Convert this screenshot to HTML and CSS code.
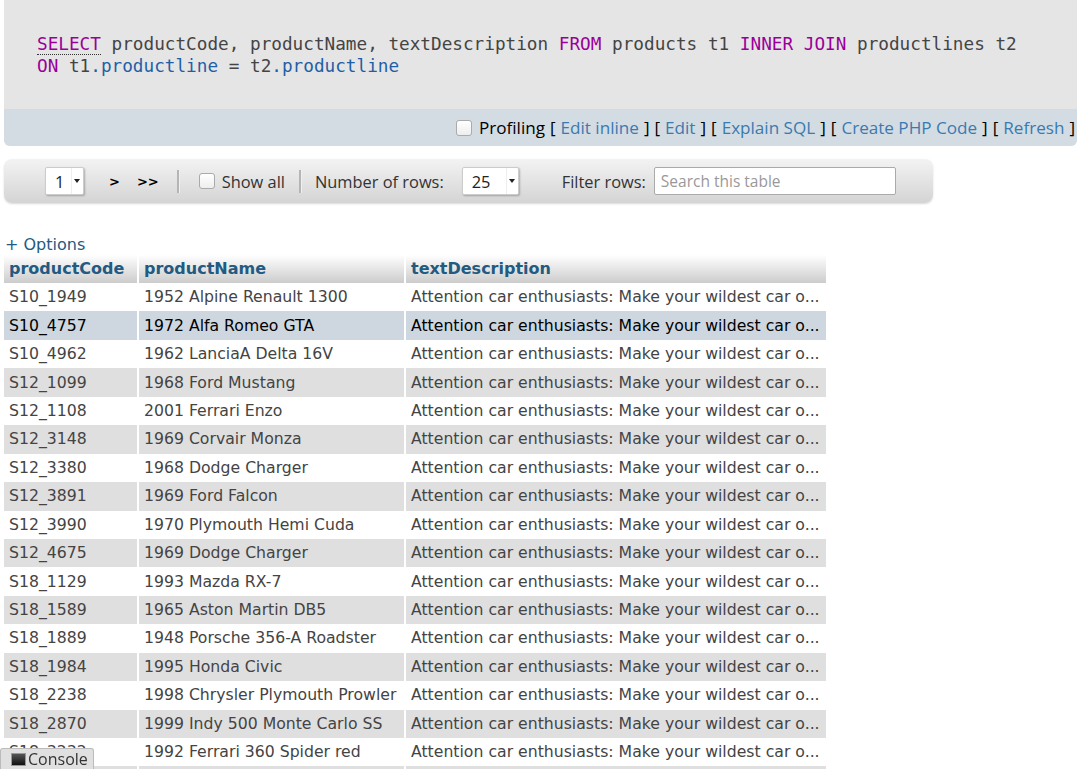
FILE: index.html
```html
<!DOCTYPE html>
<html>
<head>
<meta charset="utf-8">
<link rel="stylesheet" href="styles.css">
</head>
<body>
<div class="page">
  <div class="sqlbox">
    <div class="code"><span class="kw kw-select">SELECT</span> productCode, productName, textDescription <span class="kw">FROM</span> products t1 <span class="kw">INNER JOIN</span> productlines t2<br><span class="kw">ON</span> t1<span class="col">.productline</span> = t2<span class="col">.productline</span></div>
    <div class="tools">
      <label class="prof"><span class="cb"></span>Profiling</label>
      <span class="br">[</span> <a>Edit inline</a> <span class="br">]</span>
      <span class="br">[</span> <a>Edit</a> <span class="br">]</span>
      <span class="br">[</span> <a>Explain SQL</a> <span class="br">]</span>
      <span class="br">[</span> <a>Create PHP Code</a> <span class="br">]</span>
      <span class="br">[</span> <a>Refresh</a> <span class="br">]</span>
    </div>
  </div>

  <div class="navbar">
    <div class="dd dd-page"><span>1</span><span class="arrow"></span></div>
    <span class="nav-btn nb1">&gt;</span>
    <span class="nav-btn nb2">&gt;&gt;</span>
    <span class="sep sep1"></span>
    <label class="showall"><span class="cb"></span>Show all</label>
    <span class="sep sep2"></span>
    <span class="lbl">Number of rows:</span>
    <div class="dd dd-rows"><span>25</span><span class="arrow"></span></div>
    <span class="lbl filter">Filter rows:</span>
    <div class="search">Search this table</div>
  </div>

  <div class="options">+ Options</div>

  <table class="data">
    <colgroup><col class="w1"><col class="w2"><col class="w3"></colgroup>
    <thead>
      <tr><th>productCode</th><th>productName</th><th>textDescription</th></tr>
    </thead>
    <tbody>
      <tr><td>S10_1949</td><td>1952 Alpine Renault 1300</td><td>Attention car enthusiasts: Make your wildest car o...</td></tr>
      <tr class="hover"><td>S10_4757</td><td>1972 Alfa Romeo GTA</td><td>Attention car enthusiasts: Make your wildest car o...</td></tr>
      <tr><td>S10_4962</td><td>1962 LanciaA Delta 16V</td><td>Attention car enthusiasts: Make your wildest car o...</td></tr>
      <tr><td>S12_1099</td><td>1968 Ford Mustang</td><td>Attention car enthusiasts: Make your wildest car o...</td></tr>
      <tr><td>S12_1108</td><td>2001 Ferrari Enzo</td><td>Attention car enthusiasts: Make your wildest car o...</td></tr>
      <tr><td>S12_3148</td><td>1969 Corvair Monza</td><td>Attention car enthusiasts: Make your wildest car o...</td></tr>
      <tr><td>S12_3380</td><td>1968 Dodge Charger</td><td>Attention car enthusiasts: Make your wildest car o...</td></tr>
      <tr><td>S12_3891</td><td>1969 Ford Falcon</td><td>Attention car enthusiasts: Make your wildest car o...</td></tr>
      <tr><td>S12_3990</td><td>1970 Plymouth Hemi Cuda</td><td>Attention car enthusiasts: Make your wildest car o...</td></tr>
      <tr><td>S12_4675</td><td>1969 Dodge Charger</td><td>Attention car enthusiasts: Make your wildest car o...</td></tr>
      <tr><td>S18_1129</td><td>1993 Mazda RX-7</td><td>Attention car enthusiasts: Make your wildest car o...</td></tr>
      <tr><td>S18_1589</td><td>1965 Aston Martin DB5</td><td>Attention car enthusiasts: Make your wildest car o...</td></tr>
      <tr><td>S18_1889</td><td>1948 Porsche 356-A Roadster</td><td>Attention car enthusiasts: Make your wildest car o...</td></tr>
      <tr><td>S18_1984</td><td>1995 Honda Civic</td><td>Attention car enthusiasts: Make your wildest car o...</td></tr>
      <tr><td>S18_2238</td><td>1998 Chrysler Plymouth Prowler</td><td>Attention car enthusiasts: Make your wildest car o...</td></tr>
      <tr><td>S18_2870</td><td>1999 Indy 500 Monte Carlo SS</td><td>Attention car enthusiasts: Make your wildest car o...</td></tr>
      <tr><td>S18_3232</td><td>1992 Ferrari 360 Spider red</td><td>Attention car enthusiasts: Make your wildest car o...</td></tr>
      <tr class="blank"><td></td><td></td><td></td></tr>
    </tbody>
  </table>
</div>
<div class="console"><span class="con-ico"></span>Console</div>
</body>
</html>
```

FILE: styles.css
```css
html, body {
  margin: 0;
  padding: 0;
  background: #fff;
  overflow: hidden;
}
body {
  font-family: "DejaVu Sans", sans-serif;
  font-size: 16px;
  color: #444;
}
.page {
  padding-left: 4px;
}
.sqlbox {
  width: 1073px;
  background: #e5e5e5;
  border-radius: 0 0 6px 6px;
  overflow: hidden;
}
.code {
  font-family: "DejaVu Sans Mono", monospace;
  font-size: 17.7px;
  line-height: 22px;
  color: #444;
  padding: 33px 0 0 33px;
  height: 109px;
  box-sizing: border-box;
  white-space: nowrap;
}
.kw { color: #990099; }
.kw-select { border-bottom: 1px dotted #333; }
.col { color: #1f5fa6; }
.tools {
  background: #d3dce3;
  height: 37px;
  display: flex;
  align-items: center;
  justify-content: flex-end;
  padding-right: 2px;
  font-family: "Open Sans", sans-serif;
  font-size: 17.1px;
  color: #000;
  white-space: pre;
}
.tools a { color: #3a7ab0; }
.tools .br { color: #000; }
.tools > * { margin-left: 5px; }
.prof { display: flex; align-items: center; }
.cb {
  display: inline-block;
  width: 14px;
  height: 14px;
  border: 1px solid #aaa;
  border-radius: 3px;
  background: linear-gradient(#fff, #eee);
  margin-right: 7px;
}
.navbar {
  margin-top: 13px;
  width: 929px;
  height: 44px;
  box-sizing: border-box;
  border-radius: 8px;
  background: linear-gradient(#f3f3f3, #d4d4d4);
  box-shadow: 0 1px 2px rgba(0,0,0,0.15);
  display: flex;
  align-items: center;
  padding-left: 41px;
  font-family: "Open Sans", sans-serif;
  font-size: 16.4px;
  color: #333;
}
.dd {
  position: relative;
  height: 28px;
  box-sizing: border-box;
  background: #fff;
  border: 1px solid #ccc;
  border-radius: 2px;
  box-shadow: 1px 1px 2px rgba(0,0,0,0.25);
  display: flex;
  align-items: center;
  padding-left: 9px;
  color: #222;
}
.dd .arrow {
  position: absolute;
  right: 3px;
  top: 11px;
  width: 0; height: 0;
  border-left: 3px solid transparent;
  border-right: 3px solid transparent;
  border-top: 4px solid #222;
}
.dd::after {
  content: "";
  position: absolute;
  right: 11px;
  top: 0;
  bottom: 0;
  border-left: 1px solid #eee;
}
.dd-page { width: 39px; }
.dd-rows { width: 57px; margin-left: 18px; }
.nav-btn {
  font-family: "DejaVu Sans", sans-serif;
  font-weight: bold;
  font-size: 13px;
  color: #000;
}
.nb1 { margin-left: 25px; }
.nb2 { margin-left: 17px; }
.sep {
  width: 2px;
  height: 23px;
  background: #b5b5b5;
  border-right: 1px solid #f0f0f0;
}
.sep1 { margin: 0 12px 0 18px; }
.sep2 { margin: 0 13px 0 14px; }
.showall { display: flex; align-items: center; margin-left: 7px; }
.lbl { color: #333; }
.filter { margin-left: 43px; }
.search {
  margin-left: 8px;
  width: 242px;
  height: 28px;
  box-sizing: border-box;
  background: #fff;
  border: 1px solid #aaa;
  border-radius: 2px;
  color: #999;
  display: flex;
  align-items: center;
  padding-left: 6px;
  font-size: 15.5px;
}
.options {
  margin-top: 33px;
  padding-left: 1px;
  color: #235a81;
  font-size: 16px;
  line-height: 18px;
  height: 19px;
}
table.data {
  border-collapse: collapse;
  border-spacing: 0;
  table-layout: fixed;
  width: 822px;
}
col.w1 { width: 134px; }
col.w2 { width: 267px; }
col.w3 { width: 421px; }
.data th {
  text-align: left;
  font-weight: bold;
  color: #235a81;
  background: linear-gradient(#fff, #ccc);
  height: 28px;
  padding: 0 5px;
  line-height: 18px;
  box-sizing: border-box;
}
.data th + th { border-left: 2px solid #fff; }
.data td {
  padding: 0 5px;
  height: 28.44px;
  line-height: 18px;
  font-size: 15.7px;
  white-space: nowrap;
  overflow: hidden;
  color: #444;
}
.data td + td { border-left: 2px solid transparent; }
.data tbody tr:nth-child(even) td { background: #dfdfdf; }
.data tbody tr.hover td { background: #ced6df; color: #000; }
.console {
  position: fixed;
  left: 0;
  bottom: 0;
  width: 94px;
  height: 21px;
  box-sizing: border-box;
  background: #e0e0e0;
  border: 1px solid #bbb;
  border-bottom: none;
  border-radius: 3px 3px 0 0;
  display: flex;
  align-items: center;
  padding-left: 10px;
  font-family: "Open Sans", sans-serif;
  font-size: 16px;
  color: #333;
  line-height: 1;
}
.con-ico {
  width: 15px;
  height: 13px;
  background: linear-gradient(#555, #111);
  margin-right: 2px;
  border: 1px solid #999;
  box-sizing: border-box;
}
```
